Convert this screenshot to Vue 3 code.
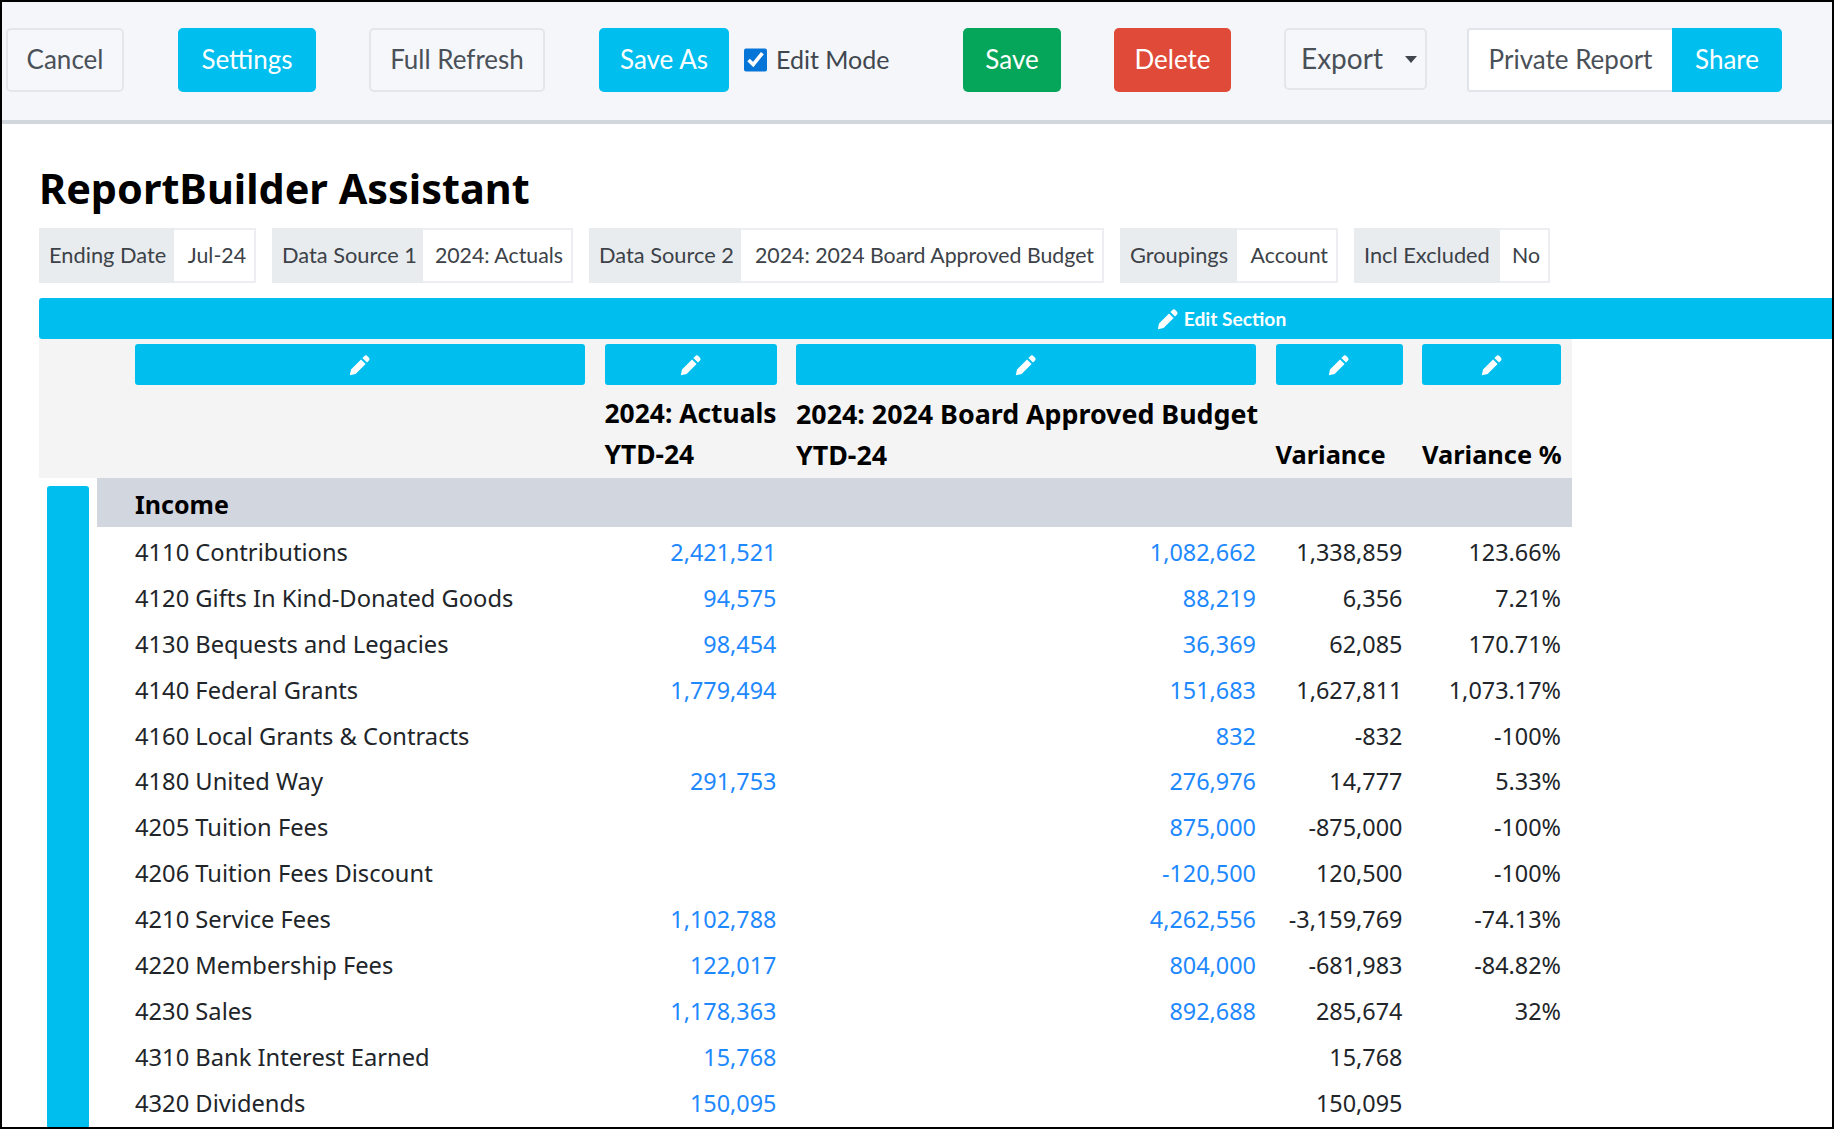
<script setup>
const rows = [
  ['4110 Contributions', '2,421,521', '1,082,662', '1,338,859', '123.66%'],
  ['4120 Gifts In Kind-Donated Goods', '94,575', '88,219', '6,356', '7.21%'],
  ['4130 Bequests and Legacies', '98,454', '36,369', '62,085', '170.71%'],
  ['4140 Federal Grants', '1,779,494', '151,683', '1,627,811', '1,073.17%'],
  ['4160 Local Grants & Contracts', '', '832', '-832', '-100%'],
  ['4180 United Way', '291,753', '276,976', '14,777', '5.33%'],
  ['4205 Tuition Fees', '', '875,000', '-875,000', '-100%'],
  ['4206 Tuition Fees Discount', '', '-120,500', '120,500', '-100%'],
  ['4210 Service Fees', '1,102,788', '4,262,556', '-3,159,769', '-74.13%'],
  ['4220 Membership Fees', '122,017', '804,000', '-681,983', '-84.82%'],
  ['4230 Sales', '1,178,363', '892,688', '285,674', '32%'],
  ['4310 Bank Interest Earned', '15,768', '', '15,768', ''],
  ['4320 Dividends', '150,095', '', '150,095', '']
]
const badges = [
  ['Ending Date', 'Jul-24', 135, 82],
  ['Data Source 1', '2024: Actuals', 151, 150],
  ['Data Source 2', '2024: 2024 Board Approved Budget', 152, 363],
  ['Groupings', 'Account', 117, 101],
  ['Incl Excluded', 'No', 146, 50]
]
const pencil = 'M16.2 3.2a2.4 2.4 0 0 1 3.4 0l1.2 1.2a2.4 2.4 0 0 1 0 3.4L19 9.6 14.4 5ZM13 6.4 17.6 11 7.6 21 1.8 22.2 3 16.4Z'
</script>

<template>
  <div class="frame">
    <header class="toolbar">
      <button class="btn plain cancel">Cancel</button>
      <button class="btn info settings">Settings</button>
      <button class="btn plain refresh">Full Refresh</button>
      <button class="btn info saveas">Save As</button>
      <label class="edit"><input type="checkbox" checked /><span>Edit Mode</span></label>
      <button class="btn save">Save</button>
      <button class="btn del">Delete</button>
      <button class="btn plain export"><span>Export</span><i class="caret"></i></button>
      <div class="share-group">
        <span class="private">Private Report</span>
        <span class="share">Share</span>
      </div>
    </header>

    <main class="content">
      <h1>ReportBuilder Assistant</h1>
      <div class="badges">
        <div v-for="b in badges" :key="b[0]" class="badge">
          <span class="b-label" :style="{ width: b[2] + 'px' }">{{ b[0] }}</span>
          <span class="b-value" :style="{ width: b[3] + 'px' }">{{ b[1] }}</span>
        </div>
      </div>

      <div class="section-bar">
        <svg class="pen-lg" viewBox="0 0 24 24"><path :d="pencil" /></svg>
        <span>Edit Section</span>
      </div>

      <div class="report">
        <div class="head">
          <div class="grid pens">
            <div v-for="n in 5" :key="n" class="pen-btn">
              <svg viewBox="0 0 24 24"><path :d="pencil" /></svg>
            </div>
          </div>
          <div class="grid titles">
            <div></div>
            <div>2024: Actuals<br />YTD-24</div>
            <div class="budget">2024: 2024 Board Approved Budget<br />YTD-24</div>
            <div class="bottom">Variance</div>
            <div class="bottom">Variance %</div>
          </div>
        </div>

        <div class="body">
          <div class="side"></div>
          <div class="table">
            <div class="band">Income</div>
            <div class="rows">
              <div v-for="r in rows" :key="r[0]" class="grid row">
                <div class="label">{{ r[0] }}</div>
                <div class="num link">{{ r[1] }}</div>
                <div class="num link">{{ r[2] }}</div>
                <div class="num">{{ r[3] }}</div>
                <div class="num">{{ r[4] }}</div>
              </div>
            </div>
          </div>
        </div>
      </div>
    </main>
  </div>
</template>

<style>
html, body { margin: 0; background: #fff; }
</style>

<style scoped>
.frame {
  box-sizing: border-box;
  width: 1834px;
  height: 1129px;
  border: 2px solid #000;
  overflow: hidden;
  background: #fff;
  font-family: "Noto Sans", sans-serif;
  color: #212529;
}
.toolbar {
  box-sizing: border-box;
  height: 122px;
  display: flex;
  align-items: flex-start;
  padding: 26px 0 0 4px;
  background: #f4f6fa;
  border-bottom: 4px solid #d2d6dd;
  font-family: Lato, sans-serif;
  font-size: 26px;
}
.btn {
  box-sizing: border-box;
  height: 64px;
  padding: 0 0 2px;
  border: 2px solid transparent;
  border-radius: 5px;
  font: inherit;
  color: #fff;
  text-align: center;
}
.plain { background: #f6f7fa; border-color: #e4e6ea; color: #4a5058; }
.info { background: #00bfef; }
.cancel { width: 118px; }
.settings { width: 138px; margin-left: 54px; }
.refresh { width: 176px; margin-left: 53px; }
.saveas { width: 130px; margin-left: 54px; }
.edit {
  display: flex;
  align-items: center;
  height: 62px;
  margin-left: 15px;
  width: 219px;
  font-size: 25px;
  color: #40464e;
}
.edit input {
  width: 23px;
  height: 24px;
  margin: 2px 9px 0 0;
  accent-color: #0675d8;
}
.save { width: 98px; background: #05a55a; }
.del { width: 117px; margin-left: 53px; background: #e04a38; }
.export {
  width: 143px;
  height: 62px;
  margin-left: 53px;
  display: flex;
  align-items: center;
  padding-left: 15px;
  font-size: 28px;
}
.caret {
  width: 0;
  height: 0;
  margin-left: 22px;
  margin-top: 2px;
  border-left: 6.5px solid transparent;
  border-right: 6.5px solid transparent;
  border-top: 7px solid #40464e;
}
.share-group {
  display: flex;
  height: 64px;
  margin-left: 40px;
}
.private {
  box-sizing: border-box;
  width: 205px;
  padding-bottom: 2px;
  display: flex;
  align-items: center;
  justify-content: center;
  background: #fff;
  border: 2px solid #e1e4ea;
  border-right: 0;
  border-radius: 3px 0 0 3px;
  color: #4a5058;
}
.share {
  width: 110px;
  padding-bottom: 2px;
  display: flex;
  align-items: center;
  justify-content: center;
  background: #00bfef;
  color: #fff;
  border-radius: 0 5px 5px 0;
}
.content { padding: 0 0 0 37px; }
h1 {
  margin: 0;
  padding-top: 32px;
  height: 72px;
  font-size: 41.4px;
  line-height: 64px;
  font-weight: 700;
  color: #000;
}
.badges {
  display: flex;
  gap: 16px;
  height: 55px;
}
.badge {
  display: flex;
  font-family: Lato, sans-serif;
  font-size: 21.8px;
  color: #3c4248;
}
.b-label {
  box-sizing: border-box;
  display: flex;
  align-items: center;
  padding: 0 0 2px 10px;
  background: #e9ecef;
  white-space: nowrap;
}
.b-value {
  box-sizing: border-box;
  display: flex;
  align-items: center;
  justify-content: flex-end;
  padding: 0 8px 2px 0;
  background: #fff;
  border: 2px solid #eceef1;
  border-left: 0;
  font-size: 21.3px;
  white-space: nowrap;
}
.section-bar {
  box-sizing: border-box;
  width: 2364px;
  height: 41px;
  margin-top: 15px;
  display: flex;
  align-items: center;
  justify-content: center;
  gap: 4px;
  background: #00bfef;
  border-radius: 3px 0 0 3px;
  color: #fff;
  font-family: Lato, sans-serif;
  font-size: 19.2px;
  font-weight: 700;
}
.pen-lg { width: 24px; height: 24px; fill: #fff; }
.report { width: 1533px; }
.head { background: #f4f4f4; height: 139px; }
.grid {
  display: grid;
  grid-template-columns: 450px 172px 460px 127px 139px;
  column-gap: 19.5px;
  padding-left: 96px;
}
.pens { padding-top: 5px; }
.pen-btn {
  height: 41px;
  display: flex;
  align-items: center;
  justify-content: center;
  background: #00bfef;
  border-radius: 3px;
}
.pen-btn svg { width: 24px; height: 24px; fill: #fff; }
.titles {
  padding-top: 8px;
  font-size: 26.4px;
  font-weight: 700;
  line-height: 41px;
  color: #000;
  white-space: nowrap;
}
.budget { font-size: 26.8px; }
.bottom { align-self: end; font-size: 25.4px; }
.body { display: flex; height: 650px; position: relative; }
.side {
  width: 42px;
  margin: 8px 8px 0 8px;
  background: #00bfef;
  border-radius: 3px 3px 0 0;
}
.table { flex: 1; }
.band {
  height: 49px;
  padding: 2px 0 0 38px;
  box-sizing: border-box;
  display: flex;
  align-items: center;
  background: #d2d6df;
  font-size: 25px;
  font-weight: 700;
  color: #000;
}
.rows { padding-top: 3px; }
.row {
  height: 45.9px;
  line-height: 45.9px;
  padding-left: 38px;
  font-size: 23.4px;
  color: #212529;
  white-space: nowrap;
}
.label { font-size: 23.7px; }
.num { text-align: right; }
.link { color: #1e88ff; }
</style>
